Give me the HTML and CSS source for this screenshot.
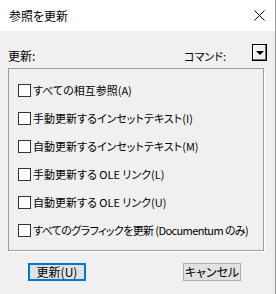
FILE: index.html
```html
<!DOCTYPE html>
<html lang="ja">
<head>
	<meta charset="UTF-8">
	<title>参照を更新</title>
	<link rel="stylesheet" href="styles.css">
</head>
<body>
<div class="window">
	<div class="titleBar">
		<span class="title">参照を更新</span>
		<svg class="close" width="11" height="11" viewBox="0 0 11 11">
			<path d="M0.5 0.5 L10.5 10.5 M10.5 0.5 L0.5 10.5" stroke="#000" stroke-width="1" fill="none"/>
		</svg>
	</div>
	<div class="content">
		<div class="header">
			<span class="label">更新:</span>
			<span class="label command">コマンド:</span>
			<button class="dropBtn"><span class="arrow"></span></button>
		</div>
		<div class="group">
			<label class="row"><span class="check"></span>すべての相互参照(A)</label>
			<label class="row"><span class="check"></span>手動更新するインセットテキスト(I)</label>
			<label class="row"><span class="check"></span>自動更新するインセットテキスト(M)</label>
			<label class="row"><span class="check"></span>手動更新する OLE リンク(L)</label>
			<label class="row"><span class="check"></span>自動更新する OLE リンク(U)</label>
			<label class="row"><span class="check"></span><span class="tight">すべてのグラフィックを更新 (Documentum のみ)</span></label>
		</div>
		<div class="buttons">
			<button class="btn btnDefault">更新(U)</button>
			<button class="btn">キャンセル</button>
		</div>
	</div>
</div>
</body>
</html>
```

FILE: styles.css
```css
* {
	margin: 0;
	padding: 0;
	box-sizing: border-box;
}

body {
	background-color: #f0f0f0;
	font-family: "Noto Sans CJK JP", "Noto Sans", sans-serif;
	font-size: 11px;
	font-feature-settings: "palt";
	color: #000;
}

.window {
	width: 276px;
	height: 294px;
	border-right: 1px solid #9a9a9a;
}

.titleBar {
	height: 31px;
	background-color: #fff;
	display: flex;
	align-items: center;
	justify-content: space-between;
	padding: 0 10px 0 9px;
}
.title {
	font-size: 12px;
	line-height: 16px;
}
.close {
	display: block;
}

.content {
	padding: 0 8px;
}

.header {
	display: flex;
	align-items: flex-start;
	margin-top: 13px;
	height: 20px;
}
.label {
	margin-top: 4px;
	line-height: 16px;
	font-size: 12px;
}
.command {
	margin-left: auto;
	margin-right: 26px;
	font-size: 11px;
}
.dropBtn {
	width: 15px;
	height: 17px;
	background-color: #f0f0f0;
	border: 1px solid #000;
	box-shadow: inset -1px -1px 0 #6d6d6d, inset 1px 1px 0 #fff;
	display: flex;
	align-items: center;
	justify-content: center;
}
.arrow {
	width: 0;
	height: 0;
	border-left: 4px solid transparent;
	border-right: 4px solid transparent;
	border-top: 4px solid #000;
}

.group {
	margin-top: 4px;
	margin-right: 3px;
	border: 1px solid #a0a0a0;
	box-shadow: 1px 1px 0 #fff;
	padding: 7px 9px 6px;
}
.row {
	display: flex;
	align-items: center;
	height: 28px;
	white-space: nowrap;
}
.tight {
	letter-spacing: -0.6px;
}
.check {
	width: 13px;
	height: 13px;
	border: 1px solid #333;
	background-color: #fff;
	margin-right: 2px;
	flex-shrink: 0;
}

.buttons {
	display: flex;
	justify-content: space-between;
	margin-top: 12px;
	padding: 0 26px 0 20px;
}
.btn {
	width: 58px;
	height: 18px;
	background-color: #e1e1e1;
	border: 1px solid #adadad;
	font-family: inherit;
	font-size: 12px;
	font-feature-settings: "palt";
	line-height: 14px;
	color: #000;
}
.btnDefault {
	border: 2px solid #0078d7;
}
```
